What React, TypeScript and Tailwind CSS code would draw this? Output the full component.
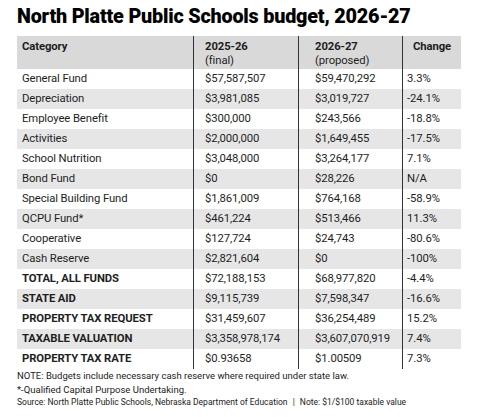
import React from "react";

const rows: { c: string; a: string; b: string; d: string; bold?: boolean }[] = [
  { c: "General Fund", a: "$57,587,507", b: "$59,470,292", d: "3.3%" },
  { c: "Depreciation", a: "$3,981,085", b: "$3,019,727", d: "-24.1%" },
  { c: "Employee Benefit", a: "$300,000", b: "$243,566", d: "-18.8%" },
  { c: "Activities", a: "$2,000,000", b: "$1,649,455", d: "-17.5%" },
  { c: "School Nutrition", a: "$3,048,000", b: "$3,264,177", d: "7.1%" },
  { c: "Bond Fund", a: "$0", b: "$28,226", d: "N/A" },
  { c: "Special Building Fund", a: "$1,861,009", b: "$764,168", d: "-58.9%" },
  { c: "QCPU Fund*", a: "$461,224", b: "$513,466", d: "11.3%" },
  { c: "Cooperative", a: "$127,724", b: "$24,743", d: "-80.6%" },
  { c: "Cash Reserve", a: "$2,821,604", b: "$0", d: "-100%" },
  { c: "TOTAL, ALL FUNDS", a: "$72,188,153", b: "$68,977,820", d: "-4.4%", bold: true },
  { c: "STATE AID", a: "$9,115,739", b: "$7,598,347", d: "-16.6%", bold: true },
  { c: "PROPERTY TAX REQUEST", a: "$31,459,607", b: "$36,254,489", d: "15.2%", bold: true },
  { c: "TAXABLE VALUATION", a: "$3,358,978,174", b: "$3,607,070,919", d: "7.4%", bold: true },
  { c: "PROPERTY TAX RATE", a: "$0.93658", b: "$1.00509", d: "7.3%", bold: true },
];

const body = { fontFamily: "Roboto, 'Open Sans', sans-serif" };

export default function App() {
  return (
    <div className="w-[484px] h-[417px] bg-white text-[#1e1e1e] pl-[17px]" style={body}>
      <h1 className="pt-[5px] h-[36px] text-[19.8px] font-black leading-[24px] text-black tracking-[-0.2px]">
        North Platte Public Schools budget, 2026-27
      </h1>
      <div className="grid grid-cols-[176px_105px_104px_59px] text-[11.3px] tracking-[-0.1px]">
        <div className="bg-[#d9d9d9] h-[33px] pl-[5px] pt-[4px] font-bold leading-[14px]">Category</div>
        <div className="bg-[#d9d9d9] h-[33px] pl-[11px] pt-[4px] border-l border-[#333] leading-[14px]">
          <div className="font-bold">2025-26</div>
          <div>(final)</div>
        </div>
        <div className="bg-[#d9d9d9] h-[33px] pl-[16px] pt-[4px] border-l border-[#333] leading-[14px]">
          <div className="font-bold">2026-27</div>
          <div>(proposed)</div>
        </div>
        <div className="bg-[#d9d9d9] h-[33px] pt-[4px] border-l border-[#333] leading-[14px] text-center font-bold">Change</div>
        {rows.map((r, i) => {
          const bg = i % 2 === 1 ? "bg-[#e6e6e6]" : "bg-white";
          return (
            <React.Fragment key={r.c}>
              <div className={`${bg} h-[20px] leading-[20px] pl-[5px] ${r.bold ? "font-bold" : ""}`}>{r.c}</div>
              <div className={`${bg} h-[20px] leading-[20px] pl-[11px] border-l border-[#333]`}>{r.a}</div>
              <div className={`${bg} h-[20px] leading-[20px] pl-[16px] border-l border-[#333]`}>{r.b}</div>
              <div className={`${bg} h-[20px] leading-[20px] pl-[4px] border-l border-[#333]`}>{r.d}</div>
            </React.Fragment>
          );
        })}
      </div>
      <div className="text-[9.5px] text-[#222] leading-[13.5px]">
        <div>NOTE: Budgets include necessary cash reserve where required under state law.</div>
        <div>*-Qualified Capital Purpose Undertaking.</div>
        <div className="text-[8.5px]">
          Source: North Platte Public Schools, Nebraska Department of Education <span className="mx-[3px]">|</span> Note: $1/$100 taxable value
        </div>
      </div>
    </div>
  );
}
